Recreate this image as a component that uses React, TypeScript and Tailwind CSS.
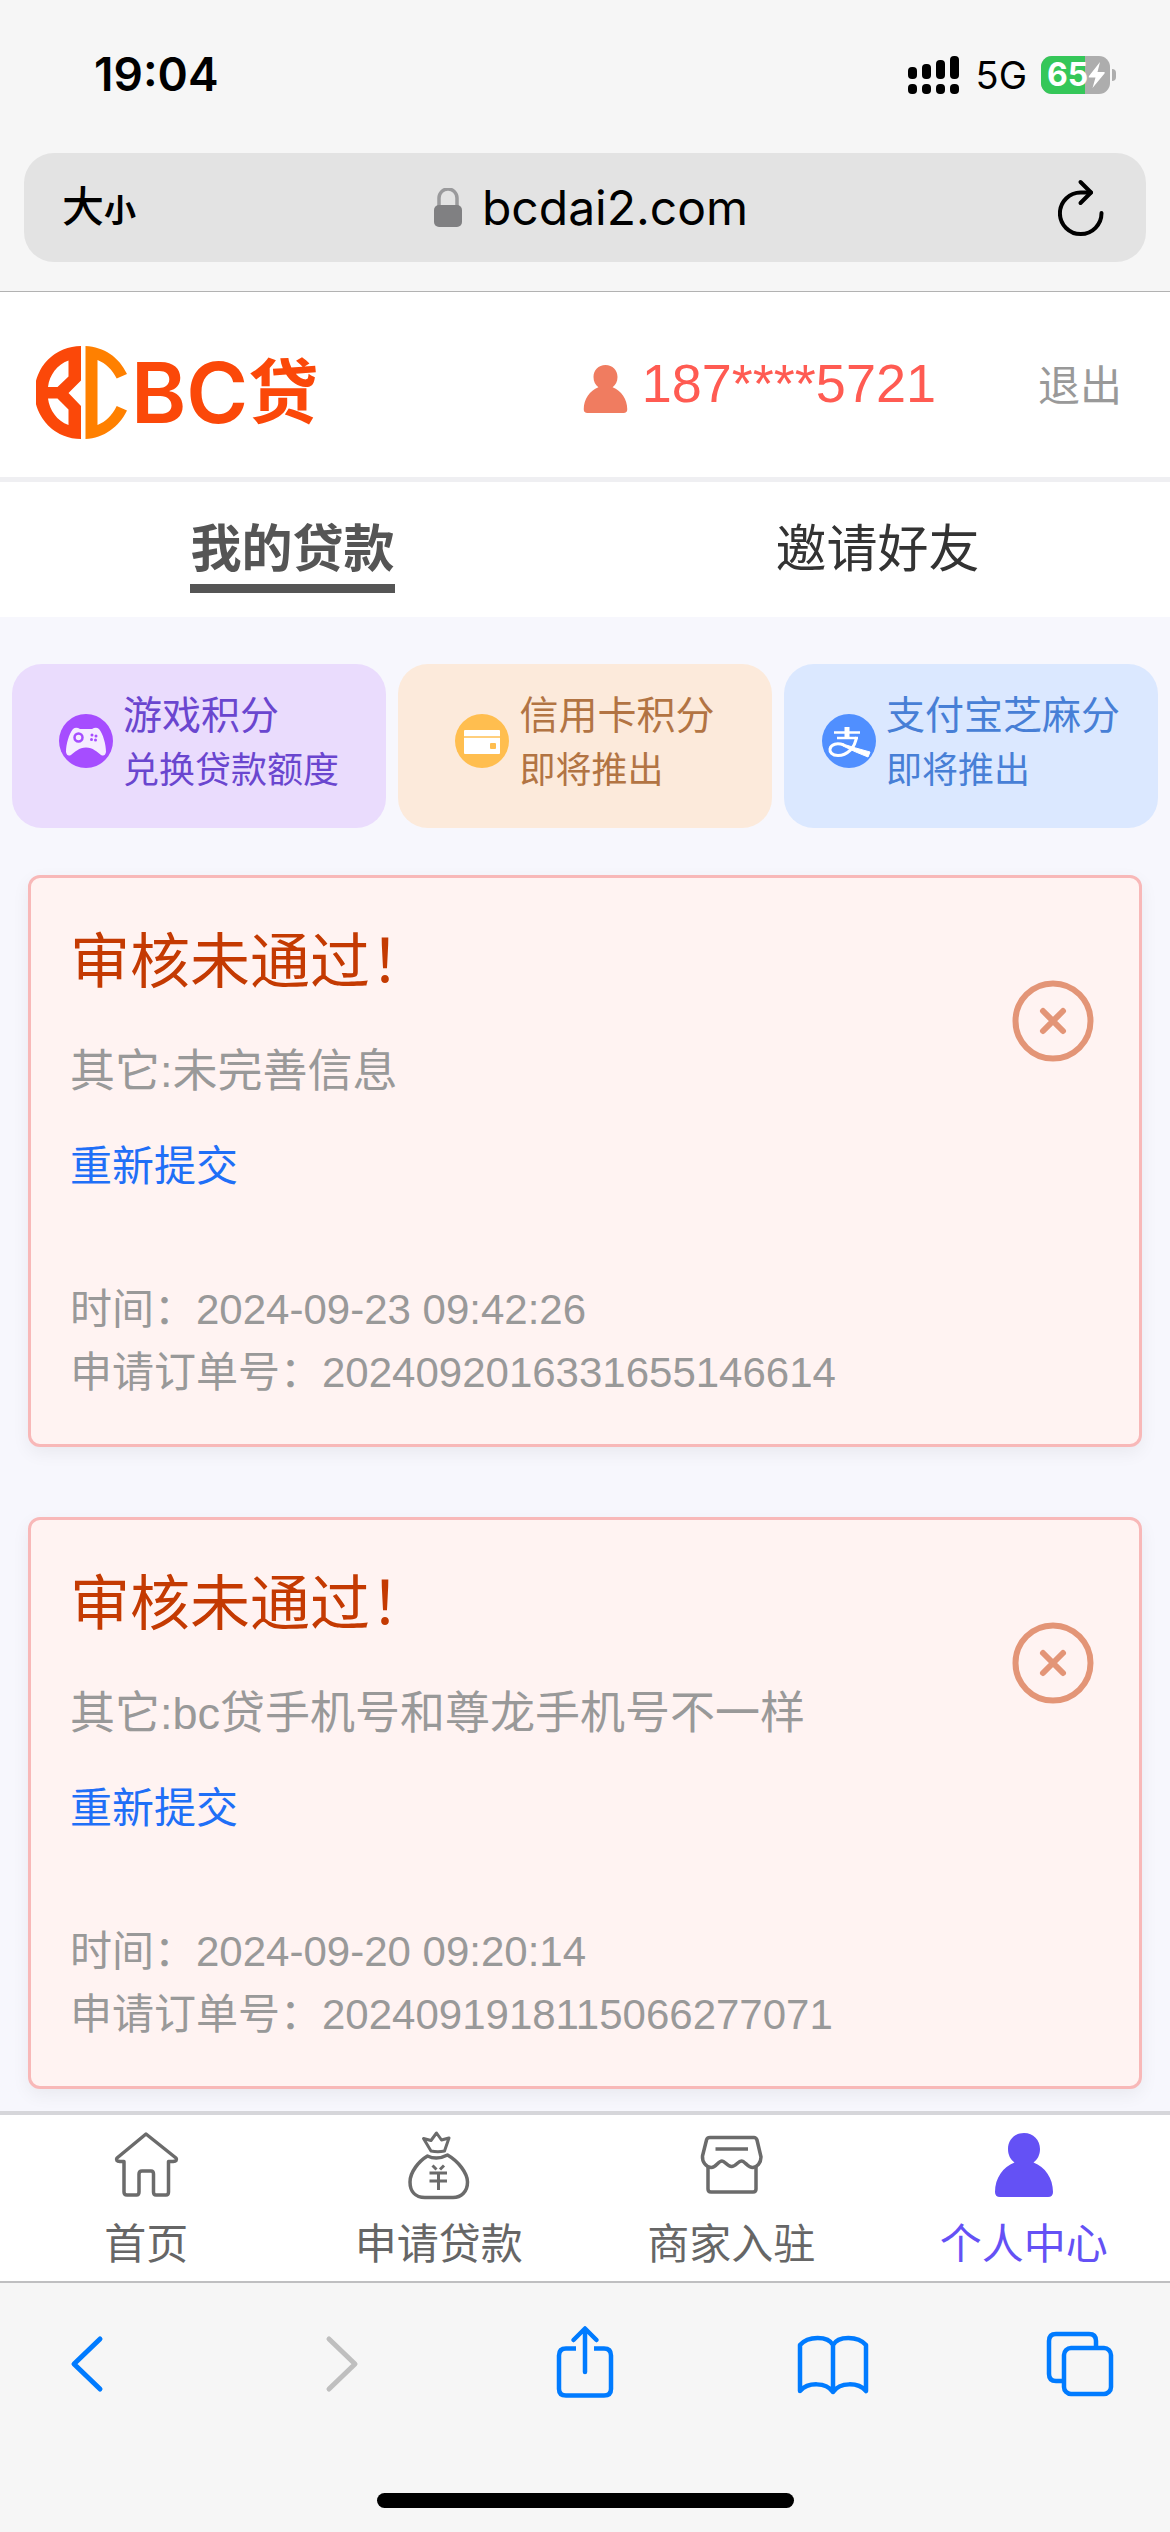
import type { ReactNode } from 'react';

interface LoanRecord {
  id: string;
  reason: string;
  time: string;
}

interface PointCardProps {
  title: string;
  subtitle: string;
  icon: ReactNode;
  className: string;
}

const loans: LoanRecord[] = [
  { id: '2024092016331655146614', reason: '未完善信息', time: '2024-09-23 09:42:26' },
  { id: '2024091918115066277071', reason: 'bc贷手机号和尊龙手机号不一样', time: '2024-09-20 09:20:14' },
];

function StatusBar() {
  return (
    <div className="flex items-center justify-between pl-[94px] pr-[54px] pt-[46px] pb-[50px] font-['Inter','Liberation_Sans',sans-serif] text-black">
      <span className="text-[46px] leading-[57px] font-semibold">19:04</span>
      <div className="flex items-center">
        <svg className="w-[52px] h-[38px]" viewBox="0 0 52 38" aria-hidden="true">
          <rect x="0" y="11" width="9" height="12" rx="4" />
          <rect x="14" y="8" width="9" height="15" rx="4" />
          <rect x="28" y="4" width="9" height="19" rx="4" />
          <rect x="42" y="0" width="9" height="23" rx="4" />
          <rect x="0" y="28" width="9" height="10" rx="4" />
          <rect x="14" y="28" width="9" height="10" rx="4" />
          <rect x="28" y="28" width="9" height="10" rx="4" />
          <rect x="42" y="28" width="9" height="10" rx="4" />
        </svg>
        <span className="ml-4 text-[38px] leading-[38px]">5G</span>
        <div className="relative ml-[14px] flex h-[38px] w-[69px] items-center overflow-hidden rounded-[11px] bg-[#adadad] pl-[6px]">
          <div className="absolute inset-y-0 left-0 w-[44px] bg-[#35c759]" />
          <span className="relative text-[32px] leading-[38px] font-bold text-white">65</span>
          <svg className="relative h-[26px] w-[18px]" viewBox="0 0 18 26" fill="#fff" aria-hidden="true">
            <path d="M12 0 L1 14 Q0 15.500 1.500 15.500 H7.500 L4.500 26 L16.500 11.500 Q17.500 10 16 10 H9.500 Z" />
          </svg>
        </div>
        <div className="ml-[2px] h-3 w-1 rounded-r-full bg-[#adadad]" />
      </div>
    </div>
  );
}

function AddressBar() {
  return (
    <div className="mx-6 mb-[29px] flex h-[109px] items-center justify-between rounded-[30px] bg-[#e3e3e3] pl-[38px] pr-[42px]">
      <button type="button" className="flex w-[74px] items-baseline text-black">
        <span className="text-[42px] font-medium">大</span>
        <span className="text-[32px] font-bold">小</span>
      </button>
      <div className="flex items-center gap-5">
        <svg className="h-10 w-7" viewBox="0 0 28 40" aria-hidden="true">
          <path d="M5 18 V10 a9 9 0 0 1 18 0 V18" fill="none" stroke="#9a9a9c" strokeWidth="3.500" />
          <rect x="0" y="17" width="28" height="22" rx="5" fill="#808082" />
        </svg>
        <span className="pr-3 font-['Inter','Liberation_Sans',sans-serif] text-[48px] leading-[60px] text-black">
          bcdai2.com
        </span>
      </div>
      <button type="button" aria-label="刷新">
        <svg className="h-[58px] w-[46px]" viewBox="0 0 46 58" fill="none" stroke="#000" strokeWidth="4" strokeLinecap="round" strokeLinejoin="round">
          <path d="M43.500 34 A20.800 20.800 0 1 1 23 13.500 H33" />
          <path d="M22.500 3 L33 13.500 L22.500 24" />
        </svg>
      </button>
    </div>
  );
}

function Logo() {
  return (
    <svg className="h-[93px] w-[91px]" viewBox="0 0 91 93" aria-hidden="true">
      <path
        fill="#fb4809"
        fillRule="evenodd"
        d="M45 0 A46.500 46.500 0 0 0 45 93 V60 L32.500 47 L45 34.500 Z M32.500 14.500 V30.500 L21.500 41 H12 C13.500 29 21 18.500 32.500 14.500 Z M12 52.500 H21.500 L32.500 63.500 V79 C21 75 13.500 64 12 52.500 Z"
      />
      <path
        fill="#ff8000"
        d="M49.500 0 C68 1 83 11 91 28 L80.700 32.500 C76 23.500 70 17.500 61.500 14 V79 C70 75.500 76 69.500 80.700 60 L91 64.500 C83 81 68 92 49.500 93 Z"
      />
    </svg>
  );
}

function PersonIcon({ className }: { className: string }) {
  return (
    <svg className={className} viewBox="0 0 58 64" fill="currentColor" aria-hidden="true">
      <path d="M29 0 C38.500 0 45 7 45 16 C45 22 42.500 26.500 38.500 29.500 C50 34 58 45 58 59 Q58 64 53 64 H5 Q0 64 0 59 C0 45 8 34 19.500 29.500 C15.500 26.500 13 22 13 16 C13 7 19.500 0 29 0 Z" />
    </svg>
  );
}

function PageHeader() {
  return (
    <header className="flex h-[190px] items-center justify-between border-b-[5px] border-[#efeff2] bg-white pl-9 pr-12">
      <a href="#home" className="flex items-center gap-1 pt-4 text-[#fb4809]">
        <Logo />
        <span className="flex items-center font-['Inter','Noto_Sans_CJK_SC',sans-serif]">
          <span className="text-[84px] leading-[93px] font-semibold">BC</span>
          <span className="text-[70px] leading-[93px] font-bold">贷</span>
        </span>
      </a>
      <div className="flex items-center">
        <PersonIcon className="mt-2 h-12 w-[45px] text-[#f07c60]" />
        <span className="ml-[14px] pb-1 text-[54px] leading-[60px] text-[#ff5b52]">187****5721</span>
        <button type="button" className="ml-[102px] pt-1 text-[42px] leading-[60px] text-[#999]">
          退出
        </button>
      </div>
    </header>
  );
}

function PageTabs() {
  return (
    <nav className="grid h-[135px] grid-cols-2 justify-items-center bg-white pt-[30px] text-[51px] leading-[76px]">
      <a href="#loans" className="h-[81px] border-b-[9px] border-[#555] font-bold text-[#555]">
        我的贷款
      </a>
      <a href="#invite" className="text-[#333]">
        邀请好友
      </a>
    </nav>
  );
}

function GameIcon() {
  return (
    <svg className="size-[54px] shrink-0" viewBox="0 0 54 54" aria-hidden="true">
      <circle cx="27" cy="27" r="27" fill="#a64dff" />
      <path d="M14 15 Q17 12.500 21 15 H33 Q37 12.500 40 15 C44 20 47 30 47 38 Q46 43 42 41 C38 38 34 33.500 27 33.500 C20 33.500 16 38 12 41 Q8 43 7 38 C7 30 10 20 14 15 Z" fill="#f5ecff" />
      <circle cx="19.500" cy="23.500" r="4" fill="none" stroke="#a64dff" strokeWidth="2.500" />
      <g fill="#a64dff">
        <circle cx="33" cy="21" r="1.500" />
        <circle cx="37" cy="22" r="1.500" />
        <circle cx="32.500" cy="25.500" r="1.500" />
        <circle cx="36.500" cy="26" r="1.500" />
      </g>
    </svg>
  );
}

function CreditCardIcon() {
  return (
    <svg className="size-[54px] shrink-0" viewBox="0 0 54 54" aria-hidden="true">
      <circle cx="27" cy="27" r="27" fill="#ffbe4f" />
      <rect x="9" y="16" width="36" height="24" rx="1" fill="#fff" />
      <rect x="9" y="22" width="36" height="2" fill="#ffcf7d" />
      <rect x="35" y="29" width="6" height="6" rx="1" fill="#ffbe4f" />
    </svg>
  );
}

function AlipayIcon() {
  return (
    <svg className="size-[54px] shrink-0" viewBox="0 0 54 54" fill="none" stroke="#fff" aria-hidden="true">
      <circle cx="27" cy="27" r="27" fill="#508fff" stroke="none" />
      <path d="M12 18.500 H38" strokeWidth="2.500" />
      <path d="M15 24 H36" strokeWidth="2.500" />
      <path d="M25 13 V24" strokeWidth="5" />
      <path d="M34.500 23 C33 34 25 41.500 16 41.500 C10 41.500 7.500 38 8 35 C9 30 15 28.500 22 31" strokeWidth="3" />
      <path d="M21 30 Q33 34 48 38 L46 43 Q33 38 21 32 Z" fill="#fff" strokeWidth="1" />
    </svg>
  );
}

function PointCard({ title, subtitle, icon, className }: PointCardProps) {
  return (
    <a href="#points" className={`flex items-center justify-center gap-[10px] rounded-[30px] pt-5 pb-[30px] ${className}`}>
      {icon}
      <div className="pt-1 leading-[55px]">
        <p className="text-[39px]">{title}</p>
        <p className="text-[36px]">{subtitle}</p>
      </div>
    </a>
  );
}

function LoanCard({ loan }: { loan: LoanRecord }) {
  return (
    <article className="flex items-start justify-between rounded-xl border-[3px] border-[#f8b8b8] bg-[#fff3f2] pl-[39px] pr-[41px] pt-10 pb-10 shadow-[0_6px_18px_rgba(0,0,0,0.06)]">
      <div className="text-[42px] leading-[63px] text-[#999]">
        <h2 className="text-[60px] leading-[90px] text-[#c43a02]">审核未通过！</h2>
        <p className="mt-[30px] text-[45px] leading-[68px]">其它:{loan.reason}</p>
        <a href="#resubmit" className="mt-[29px] block text-[#1f6ff7]">
          重新提交
        </a>
        <p className="mt-20">时间：{loan.time}</p>
        <p>申请订单号：{loan.id}</p>
      </div>
      <svg className="mt-[62px] mr-1 size-[82px] shrink-0" viewBox="0 0 82 82" fill="none" stroke="#e39577" strokeWidth="6" strokeLinecap="round" aria-hidden="true">
        <circle cx="41" cy="41" r="37.500" />
        <path d="M31 31 L51 51 M51 31 L31 51" />
      </svg>
    </article>
  );
}

function HomeIcon() {
  return (
    <svg className="size-[70px]" viewBox="0 0 70 70" fill="none" stroke="#6b6b6b" strokeWidth="3.500" strokeLinejoin="round" aria-hidden="true">
      <path d="M35 4 L65 28 Q67 31 62 31.500 H57.500 V62 Q57.500 65 55 65 H45 Q42.500 65 42.500 62 V44 Q42.500 41 40 41 H31 Q28 41 28 44 V62 Q28 65 25.500 65 H16 Q13 65 13 62 V31.500 H9 Q4 31 6 28 Z" />
    </svg>
  );
}

function MoneyBagIcon() {
  return (
    <svg className="size-[70px]" viewBox="0 0 70 70" fill="none" stroke="#6b6b6b" strokeWidth="3" strokeLinejoin="round" aria-hidden="true">
      <path d="M32.500 3 L37.500 10 L45 8 L40.500 21 Q34 22.500 27 21 L19.500 8.500 L27 10.500 Z" />
      <path d="M23.500 26 Q33 30.500 43.500 25 C54 31 63.500 43 63.500 52 C63.500 62 57 67.500 49 67.500 H21 C11 67.500 6 61 6 52 C6 42 15 31 23.500 26 Z" strokeWidth="3.500" />
      <path d="M28.500 35.500 L32.500 39.500 M40 35.500 L36 39.500 M25.500 43 H43 M25.500 51 H43 M34.500 43 V60" />
    </svg>
  );
}

function ShopIcon() {
  return (
    <svg className="size-[70px]" viewBox="0 0 70 70" fill="none" stroke="#6b6b6b" strokeWidth="3.500" strokeLinejoin="round" aria-hidden="true">
      <path d="M14 7.500 H58 Q60 7.500 61 10 L65 27 C65 33 61 37 57 37.500 C52 38 49 31 45.500 31 C42 31 40 36.500 35.500 36.500 C31 36.500 29 31 26 31 C22 31 20 38 15 37.500 C10 37 6 32 6.500 26 L10.500 10 Q11 7.500 14 7.500 Z" />
      <path d="M12 37 V59 Q12 62 15 62 H57 Q60 62 60 59 V37" />
      <path d="M19.500 19 H52" />
    </svg>
  );
}

function BottomTabs() {
  const items = [
    { label: '首页', icon: <HomeIcon /> },
    { label: '申请贷款', icon: <MoneyBagIcon /> },
    { label: '商家入驻', icon: <ShopIcon /> },
    { label: '个人中心', icon: <PersonIcon className="mt-[3px] mb-[3px] h-16 w-[58px]" />, active: true },
  ];

  return (
    <nav className="grid grid-cols-4 border-t-[4px] border-[#d6d6da] bg-white pt-[15px] pb-1">
      {items.map((item) => (
        <a
          key={item.label}
          href="#tab"
          className={`flex flex-col items-center gap-[13px] text-[42px] leading-[64px] ${item.active ? 'text-[#6451f5]' : 'text-[#666]'}`}
        >
          {item.icon}
          <span>{item.label}</span>
        </a>
      ))}
    </nav>
  );
}

function BrowserToolbar() {
  return (
    <footer className="border-t-2 border-[#bfbfc1] bg-[#f6f6f6] pb-6">
      <div className="flex justify-between px-[51px] pt-10 pb-[90px] text-[#007bff] [&_svg]:h-20 [&_svg]:w-[70px] [&_svg]:overflow-visible">
        <button type="button" aria-label="后退">
          <svg viewBox="0 0 70 80" fill="none" stroke="currentColor" strokeWidth="5" strokeLinecap="round" strokeLinejoin="round">
            <path d="M49 16 L23 41 L49 66" />
          </svg>
        </button>
        <button type="button" aria-label="前进" disabled className="text-[#bfbfbf]">
          <svg viewBox="0 0 70 80" fill="none" stroke="currentColor" strokeWidth="5" strokeLinecap="round" strokeLinejoin="round">
            <path d="M28 16 L54 41 L28 66" />
          </svg>
        </button>
        <button type="button" aria-label="分享">
          <svg viewBox="0 0 70 80" fill="none" stroke="currentColor" strokeWidth="4.500" strokeLinecap="round" strokeLinejoin="round">
            <path d="M26 25.500 H16 Q9 25.500 9 32.500 V66 Q9 72.500 16 72.500 H54 Q61 72.500 61 66 V32.500 Q61 25.500 54 25.500 H44" strokeLinecap="butt" />
            <path d="M35 49 V6 M23.500 17 L35 5.500 L46.500 17" />
          </svg>
        </button>
        <button type="button" aria-label="书签">
          <svg viewBox="2 0 70 80" fill="none" stroke="currentColor" strokeWidth="4.500" strokeLinecap="round" strokeLinejoin="round">
            <path d="M35 69 V22 C30 12.500 10 12.500 2 22 V68 C10 59 28 59 35 69 C42 59 60 59 68 68 V22 C60 12.500 40 12.500 35 22" />
          </svg>
        </button>
        <button type="button" aria-label="标签页">
          <svg viewBox="4 0 70 80" fill="none" stroke="currentColor" strokeWidth="4.500">
            <rect x="19" y="25" width="47" height="46" rx="7" />
            <path d="M51 25 V18 Q51 11 44 11 H11 Q4 11 4 18 V51 Q4 58 11 58 H19" />
          </svg>
        </button>
      </div>
      <div className="mx-auto h-[15px] w-[417px] rounded-full bg-black" />
    </footer>
  );
}

export default function App() {
  return (
    <div className="flex min-h-screen flex-col bg-[#f7f7fd] font-['Liberation_Sans','Noto_Sans_CJK_SC',sans-serif]">
      <div className="border-b border-[#b2b2b2] bg-[#f6f6f6]">
        <StatusBar />
        <AddressBar />
      </div>
      <PageHeader />
      <PageTabs />
      <main className="flex-1">
        <section className="grid grid-cols-3 gap-3 px-3 pt-[47px]">
          <PointCard title="游戏积分" subtitle="兑换贷款额度" icon={<GameIcon />} className="bg-[#eadcfd] text-[#6a46cf]" />
          <PointCard title="信用卡积分" subtitle="即将推出" icon={<CreditCardIcon />} className="bg-[#fceadb] text-[#b27443]" />
          <PointCard title="支付宝芝麻分" subtitle="即将推出" icon={<AlipayIcon />} className="bg-[#dbe8ff] text-[#477fd6]" />
        </section>
        <section className="flex flex-col gap-[70px] px-7 pt-[47px] pb-[22px]">
          {loans.map((loan) => (
            <LoanCard key={loan.id} loan={loan} />
          ))}
        </section>
      </main>
      <BottomTabs />
      <BrowserToolbar />
    </div>
  );
}
